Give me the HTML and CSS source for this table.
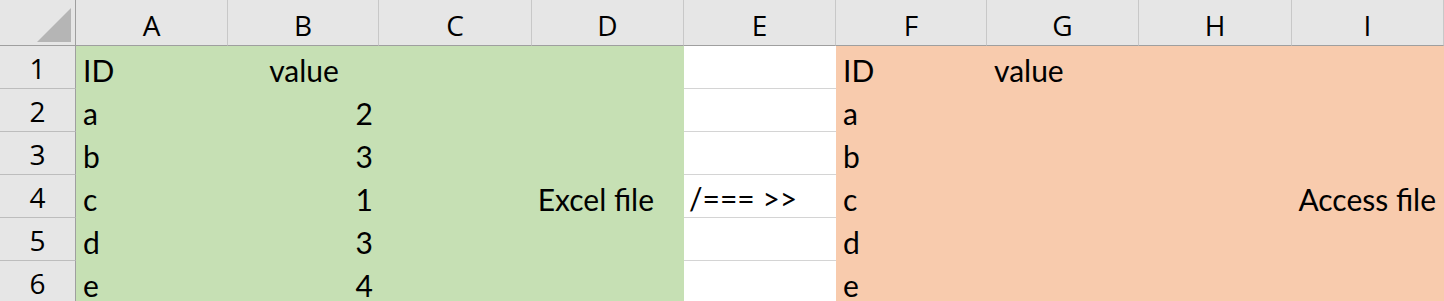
FILE: index.html
```html
<!DOCTYPE html>
<html>
<head>
<meta charset="utf-8">
<link rel="stylesheet" href="styles.css">
</head>
<body>
<div class="sheet">
  <div class="corner"><span class="tri"></span></div>
  <div class="hd">A</div><div class="hd">B</div><div class="hd">C</div><div class="hd">D</div><div class="hd">E</div><div class="hd">F</div><div class="hd">G</div><div class="hd">H</div><div class="hd">I</div>

  <div class="rh">1</div>
  <div class="c g">ID</div><div class="c g mid">value</div><div class="c g"></div><div class="c g"></div>
  <div class="c w"></div>
  <div class="c o">ID</div><div class="c o">value</div><div class="c o"></div><div class="c o"></div>

  <div class="rh">2</div>
  <div class="c g">a</div><div class="c g num">2</div><div class="c g"></div><div class="c g"></div>
  <div class="c w"></div>
  <div class="c o">a</div><div class="c o"></div><div class="c o"></div><div class="c o"></div>

  <div class="rh">3</div>
  <div class="c g">b</div><div class="c g num">3</div><div class="c g"></div><div class="c g"></div>
  <div class="c w"></div>
  <div class="c o">b</div><div class="c o"></div><div class="c o"></div><div class="c o"></div>

  <div class="rh">4</div>
  <div class="c g">c</div><div class="c g num">1</div><div class="c g"></div><div class="c g num label-x">Excel file</div>
  <div class="c w arrow">/=== &gt;&gt;</div>
  <div class="c o">c</div><div class="c o"></div><div class="c o"></div><div class="c o num label-a">Access file</div>

  <div class="rh">5</div>
  <div class="c g">d</div><div class="c g num">3</div><div class="c g"></div><div class="c g"></div>
  <div class="c w"></div>
  <div class="c o">d</div><div class="c o"></div><div class="c o"></div><div class="c o"></div>

  <div class="rh">6</div>
  <div class="c g">e</div><div class="c g num">4</div><div class="c g"></div><div class="c g"></div>
  <div class="c w"></div>
  <div class="c o">e</div><div class="c o"></div><div class="c o"></div><div class="c o"></div>
</div>
</body>
</html>
```

FILE: styles.css
```css
html, body {
  margin: 0;
  padding: 0;
  background: #ffffff;
  overflow: hidden;
}

.sheet {
  display: grid;
  grid-template-columns: 76px 152px 151px 153px 152px 152px 151px 152px 153px 152px;
  grid-template-rows: 46px repeat(6, 43px);
  width: 1444px;
}

.corner {
  background: #e6e6e6;
  border-right: 1px solid #9f9f9f;
  border-bottom: 1px solid #9f9f9f;
  box-sizing: border-box;
  position: relative;
}

.tri {
  position: absolute;
  right: 4px;
  bottom: 3px;
  width: 0;
  height: 0;
  border-left: 34px solid transparent;
  border-bottom: 34px solid #b5b5b5;
}

.hd {
  background: #e6e6e6;
  border-right: 1px solid #c8c8c8;
  border-bottom: 1px solid #9f9f9f;
  box-sizing: border-box;
  font-family: "Open Sans", "Noto Sans", sans-serif;
  font-size: 28px;
  color: #000;
  display: flex;
  align-items: center;
  justify-content: center;
  padding-top: 4px;
}

.rh {
  background: #e6e6e6;
  border-right: 1px solid #9f9f9f;
  border-bottom: 1px solid #bdbdbd;
  box-sizing: border-box;
  font-family: "Open Sans", "Noto Sans", sans-serif;
  font-size: 28px;
  color: #000;
  display: flex;
  align-items: center;
  justify-content: center;
  padding-top: 2px;
}

.c {
  box-sizing: border-box;
  font-family: Lato, "Liberation Sans", sans-serif;
  font-size: 30px;
  color: #000;
  display: flex;
  align-items: center;
  padding: 4px 6px 0 7px;
  white-space: nowrap;
}

.num {
  justify-content: flex-end;
}

.mid {
  justify-content: center;
}

.g {
  background: #c6e0b4;
}

.o {
  background: #f8cbad;
}

.w {
  background: #ffffff;
  border-bottom: 1px solid #d4d4d4;
}

.label-x {
  padding-right: 30px;
}

.label-a {
  padding-right: 8px;
}

.arrow {
  padding-left: 5px;
}
```
